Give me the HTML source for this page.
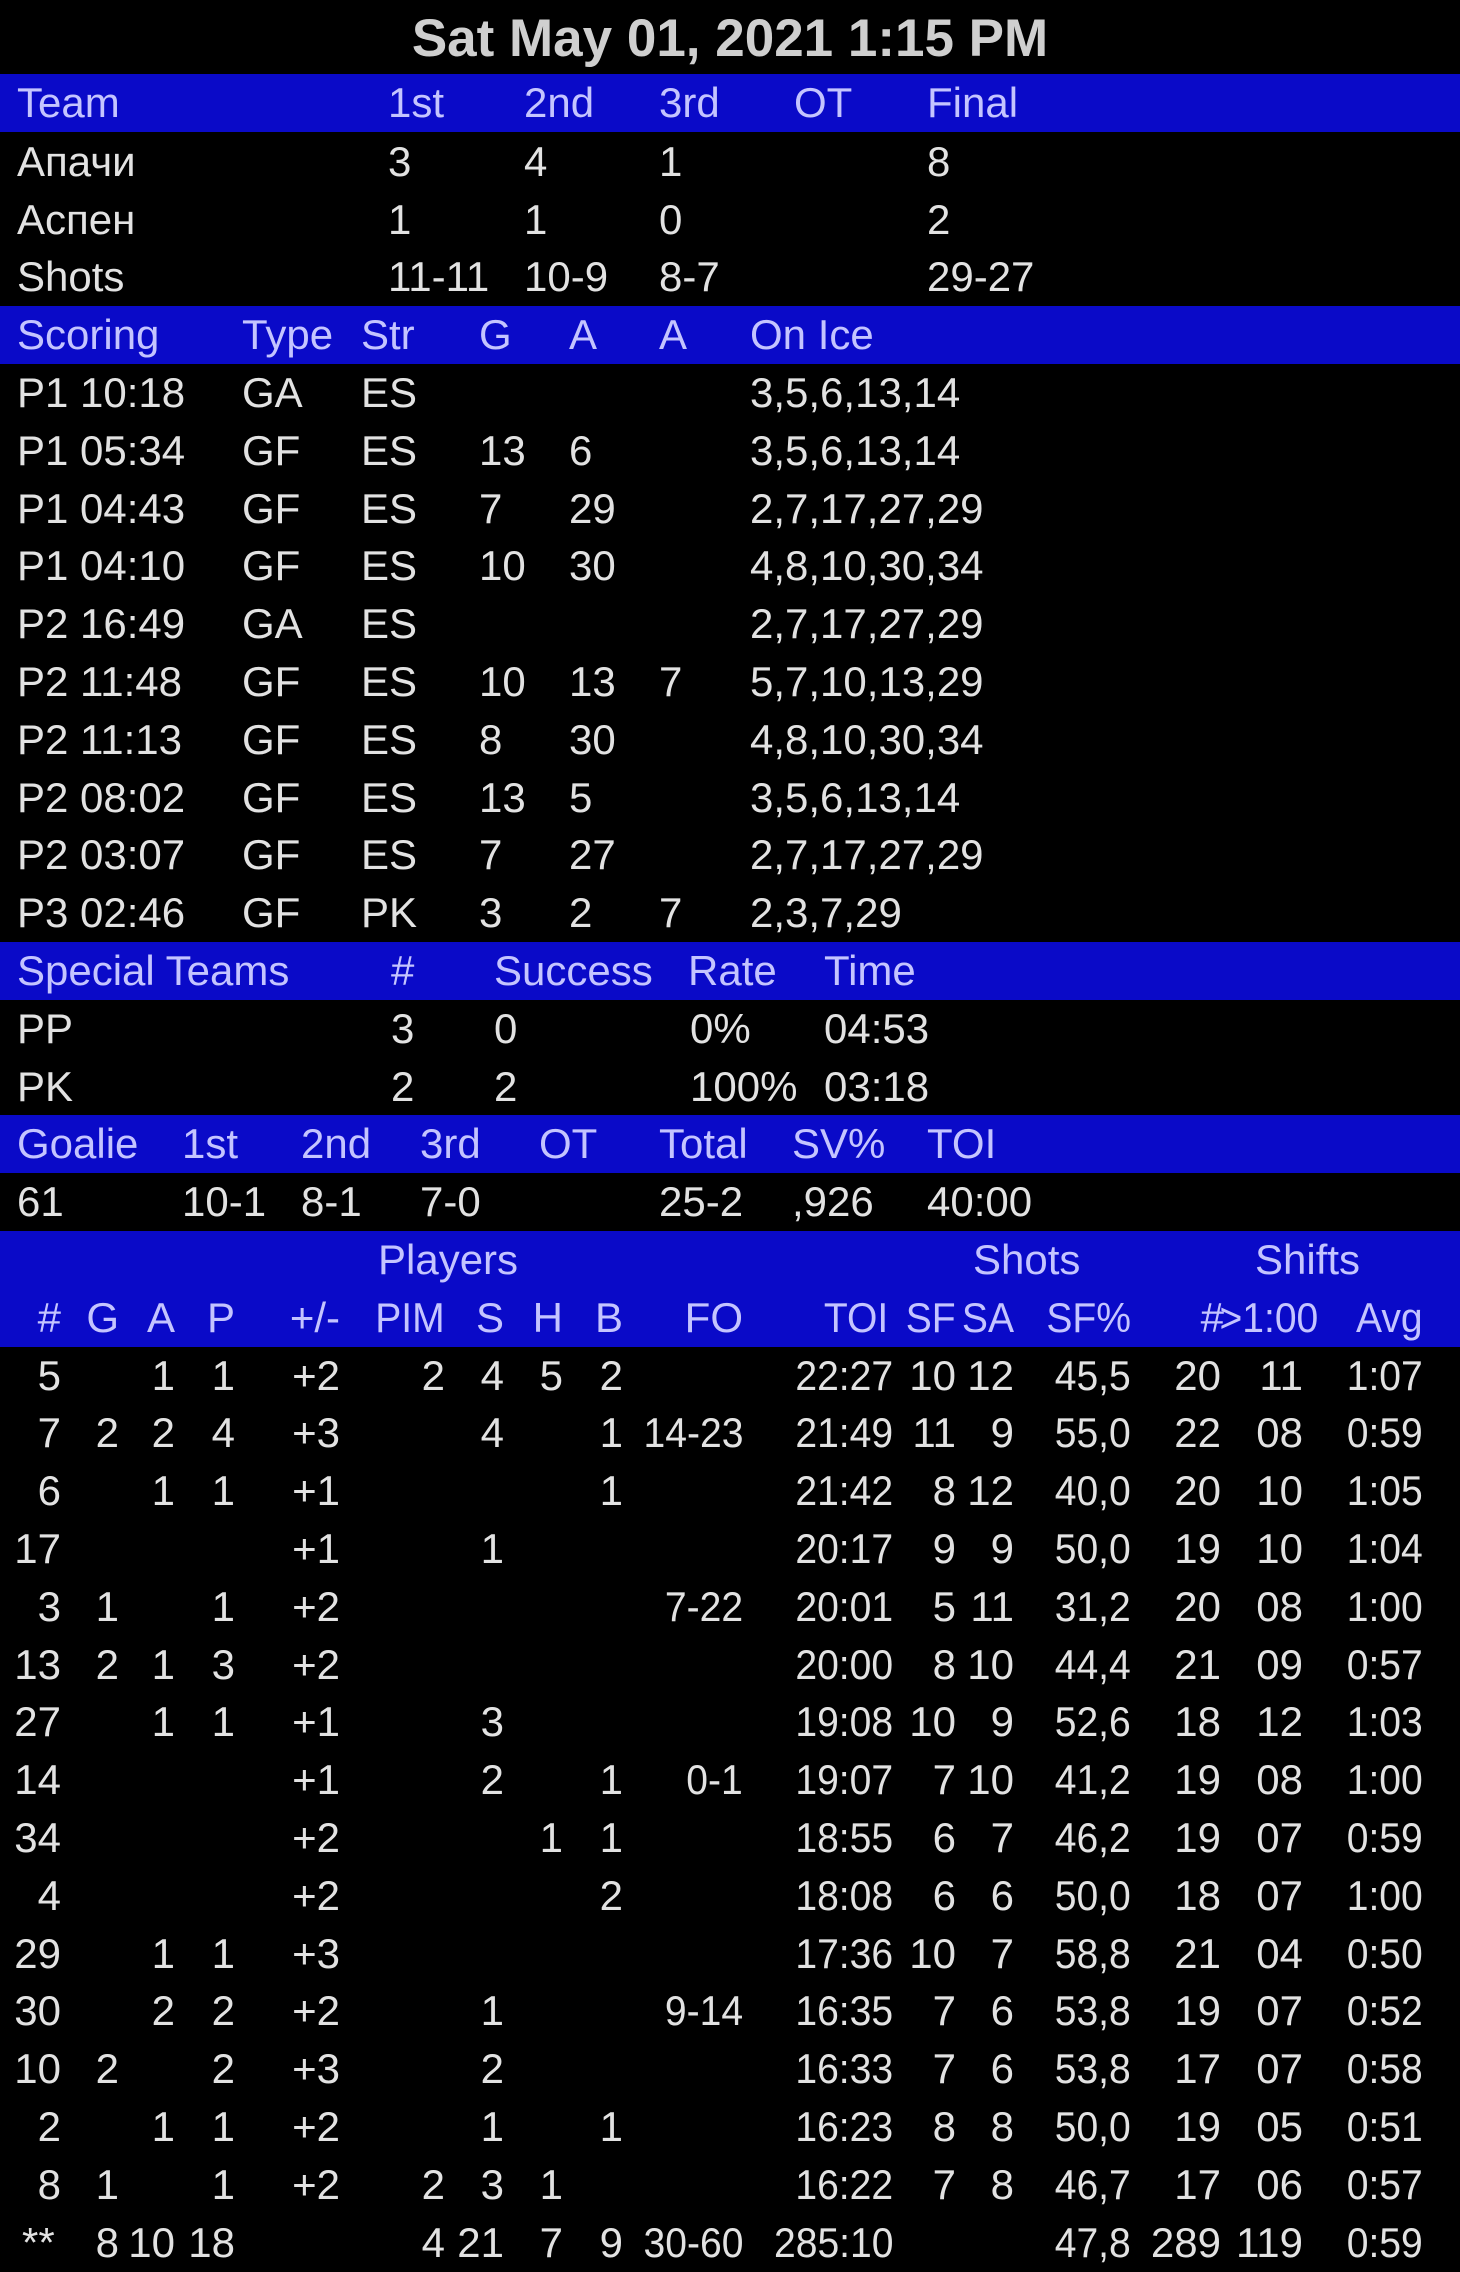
<!DOCTYPE html>
<html><head><meta charset="utf-8"><style>
html,body{margin:0;padding:0;background:#000;}
body{width:1460px;height:2272px;position:relative;overflow:hidden;font-family:"Liberation Sans",sans-serif;}
.t{position:absolute;left:0;top:8px;width:1460px;text-align:center;font-size:53px;font-weight:bold;color:#cfcfcf;line-height:62px;}
.r{position:absolute;left:0;width:1460px;height:58px;}
.b{background:#0a0ac8;}
.r span{position:absolute;top:0;line-height:58px;font-size:42px;color:#e2e2e2;white-space:nowrap;}
.b span{color:#c4c4ff;}
.r span.n{transform:scaleX(0.93);transform-origin:right center;}
.c0{right:1399px}.c1{right:1341px}.c2{right:1285px}.c3{right:1225px}.c4{right:1120px}.c5{right:1015px}.c6{right:956px}.c7{right:897px}.c8{right:837px}.c9{right:717px}.c10{right:567px}.c11{right:504px}.c12{right:446px}.c13{right:329px}.c14{right:239px}.c15{right:157px}.c16{right:37px}
</style></head><body>
<div class="t">Sat May 01, 2021 1:15 PM</div>

<div class="r b" style="top:74px"><span style="left:17px">Team</span><span style="left:388px">1st</span><span style="left:524px">2nd</span><span style="left:659px">3rd</span><span style="left:794px">OT</span><span style="left:927px">Final</span></div>
<div class="r" style="top:133px"><span style="left:17px">Апачи</span><span style="left:388px">3</span><span style="left:524px">4</span><span style="left:659px">1</span><span style="left:927px">8</span></div>
<div class="r" style="top:191px"><span style="left:17px">Аспен</span><span style="left:388px">1</span><span style="left:524px">1</span><span style="left:659px">0</span><span style="left:927px">2</span></div>
<div class="r" style="top:248px"><span style="left:17px">Shots</span><span style="left:388px">11-11</span><span style="left:524px">10-9</span><span style="left:659px">8-7</span><span style="left:927px">29-27</span></div>

<div class="r b" style="top:306px"><span style="left:17px">Scoring</span><span style="left:242px">Type</span><span style="left:361px">Str</span><span style="left:479px">G</span><span style="left:569px">A</span><span style="left:659px">A</span><span style="left:750px">On Ice</span></div>
<div class="r" style="top:364px"><span style="left:17px">P1 10:18</span><span style="left:242px">GA</span><span style="left:361px">ES</span><span style="left:750px">3,5,6,13,14</span></div>
<div class="r" style="top:422px"><span style="left:17px">P1 05:34</span><span style="left:242px">GF</span><span style="left:361px">ES</span><span style="left:479px">13</span><span style="left:569px">6</span><span style="left:750px">3,5,6,13,14</span></div>
<div class="r" style="top:480px"><span style="left:17px">P1 04:43</span><span style="left:242px">GF</span><span style="left:361px">ES</span><span style="left:479px">7</span><span style="left:569px">29</span><span style="left:750px">2,7,17,27,29</span></div>
<div class="r" style="top:537px"><span style="left:17px">P1 04:10</span><span style="left:242px">GF</span><span style="left:361px">ES</span><span style="left:479px">10</span><span style="left:569px">30</span><span style="left:750px">4,8,10,30,34</span></div>
<div class="r" style="top:595px"><span style="left:17px">P2 16:49</span><span style="left:242px">GA</span><span style="left:361px">ES</span><span style="left:750px">2,7,17,27,29</span></div>
<div class="r" style="top:653px"><span style="left:17px">P2 11:48</span><span style="left:242px">GF</span><span style="left:361px">ES</span><span style="left:479px">10</span><span style="left:569px">13</span><span style="left:659px">7</span><span style="left:750px">5,7,10,13,29</span></div>
<div class="r" style="top:711px"><span style="left:17px">P2 11:13</span><span style="left:242px">GF</span><span style="left:361px">ES</span><span style="left:479px">8</span><span style="left:569px">30</span><span style="left:750px">4,8,10,30,34</span></div>
<div class="r" style="top:769px"><span style="left:17px">P2 08:02</span><span style="left:242px">GF</span><span style="left:361px">ES</span><span style="left:479px">13</span><span style="left:569px">5</span><span style="left:750px">3,5,6,13,14</span></div>
<div class="r" style="top:826px"><span style="left:17px">P2 03:07</span><span style="left:242px">GF</span><span style="left:361px">ES</span><span style="left:479px">7</span><span style="left:569px">27</span><span style="left:750px">2,7,17,27,29</span></div>
<div class="r" style="top:884px"><span style="left:17px">P3 02:46</span><span style="left:242px">GF</span><span style="left:361px">PK</span><span style="left:479px">3</span><span style="left:569px">2</span><span style="left:659px">7</span><span style="left:750px">2,3,7,29</span></div>

<div class="r b" style="top:942px"><span style="left:17px">Special Teams</span><span style="left:391px">#</span><span style="left:494px">Success</span><span style="left:688px">Rate</span><span style="left:824px">Time</span></div>
<div class="r" style="top:1000px"><span style="left:17px">PP</span><span style="left:391px">3</span><span style="left:494px">0</span><span style="left:690px">0%</span><span style="left:824px">04:53</span></div>
<div class="r" style="top:1058px"><span style="left:17px">PK</span><span style="left:391px">2</span><span style="left:494px">2</span><span style="left:690px">100%</span><span style="left:824px">03:18</span></div>

<div class="r b" style="top:1115px"><span style="left:17px">Goalie</span><span style="left:182px">1st</span><span style="left:301px">2nd</span><span style="left:420px">3rd</span><span style="left:539px">OT</span><span style="left:659px">Total</span><span style="left:792px">SV%</span><span style="left:927px">TOI</span></div>
<div class="r" style="top:1173px"><span style="left:17px">61</span><span style="left:182px">10-1</span><span style="left:301px">8-1</span><span style="left:420px">7-0</span><span style="left:659px">25-2</span><span style="left:792px">,926</span><span style="left:927px">40:00</span></div>

<div class="r b" style="top:1231px;height:116px">
<span style="left:378px">Players</span><span style="left:973px">Shots</span><span style="left:1255px">Shifts</span>
<span class="c0" style="top:58px">#</span><span class="c1" style="top:58px">G</span><span class="c2" style="top:58px">A</span><span class="c3" style="top:58px">P</span><span class="c4" style="top:58px">+/-</span><span class="c5 n" style="top:58px">PIM</span><span class="c6" style="top:58px">S</span><span class="c7" style="top:58px">H</span><span class="c8" style="top:58px">B</span><span class="c9" style="top:58px">FO</span><span class="n" style="top:58px;right:572px">TOI</span><span class="n" style="top:58px;right:504px">SF</span><span class="c12 n" style="top:58px">SA</span><span class="c13 n" style="top:58px">SF%</span><span style="top:58px;right:236px">#</span><span class="n" style="top:58px;right:142px">&gt;1:00</span><span class="c16 n" style="top:58px">Avg</span>
</div>

<div class="r" style="top:1347px"><span class="c0">5</span><span class="c2">1</span><span class="c3">1</span><span class="c4">+2</span><span class="c5">2</span><span class="c6">4</span><span class="c7">5</span><span class="c8">2</span><span class="c10 n">22:27</span><span class="c11">10</span><span class="c12">12</span><span class="c13 n">45,5</span><span class="c14">20</span><span class="c15">11</span><span class="c16 n">1:07</span></div>
<div class="r" style="top:1404px"><span class="c0">7</span><span class="c1">2</span><span class="c2">2</span><span class="c3">4</span><span class="c4">+3</span><span class="c6">4</span><span class="c8">1</span><span class="c9 n">14-23</span><span class="c10 n">21:49</span><span class="c11">11</span><span class="c12">9</span><span class="c13 n">55,0</span><span class="c14">22</span><span class="c15">08</span><span class="c16 n">0:59</span></div>
<div class="r" style="top:1462px"><span class="c0">6</span><span class="c2">1</span><span class="c3">1</span><span class="c4">+1</span><span class="c8">1</span><span class="c10 n">21:42</span><span class="c11">8</span><span class="c12">12</span><span class="c13 n">40,0</span><span class="c14">20</span><span class="c15">10</span><span class="c16 n">1:05</span></div>
<div class="r" style="top:1520px"><span class="c0">17</span><span class="c4">+1</span><span class="c6">1</span><span class="c10 n">20:17</span><span class="c11">9</span><span class="c12">9</span><span class="c13 n">50,0</span><span class="c14">19</span><span class="c15">10</span><span class="c16 n">1:04</span></div>
<div class="r" style="top:1578px"><span class="c0">3</span><span class="c1">1</span><span class="c3">1</span><span class="c4">+2</span><span class="c9 n">7-22</span><span class="c10 n">20:01</span><span class="c11">5</span><span class="c12">11</span><span class="c13 n">31,2</span><span class="c14">20</span><span class="c15">08</span><span class="c16 n">1:00</span></div>
<div class="r" style="top:1636px"><span class="c0">13</span><span class="c1">2</span><span class="c2">1</span><span class="c3">3</span><span class="c4">+2</span><span class="c10 n">20:00</span><span class="c11">8</span><span class="c12">10</span><span class="c13 n">44,4</span><span class="c14">21</span><span class="c15">09</span><span class="c16 n">0:57</span></div>
<div class="r" style="top:1693px"><span class="c0">27</span><span class="c2">1</span><span class="c3">1</span><span class="c4">+1</span><span class="c6">3</span><span class="c10 n">19:08</span><span class="c11">10</span><span class="c12">9</span><span class="c13 n">52,6</span><span class="c14">18</span><span class="c15">12</span><span class="c16 n">1:03</span></div>
<div class="r" style="top:1751px"><span class="c0">14</span><span class="c4">+1</span><span class="c6">2</span><span class="c8">1</span><span class="c9 n">0-1</span><span class="c10 n">19:07</span><span class="c11">7</span><span class="c12">10</span><span class="c13 n">41,2</span><span class="c14">19</span><span class="c15">08</span><span class="c16 n">1:00</span></div>
<div class="r" style="top:1809px"><span class="c0">34</span><span class="c4">+2</span><span class="c7">1</span><span class="c8">1</span><span class="c10 n">18:55</span><span class="c11">6</span><span class="c12">7</span><span class="c13 n">46,2</span><span class="c14">19</span><span class="c15">07</span><span class="c16 n">0:59</span></div>
<div class="r" style="top:1867px"><span class="c0">4</span><span class="c4">+2</span><span class="c8">2</span><span class="c10 n">18:08</span><span class="c11">6</span><span class="c12">6</span><span class="c13 n">50,0</span><span class="c14">18</span><span class="c15">07</span><span class="c16 n">1:00</span></div>
<div class="r" style="top:1925px"><span class="c0">29</span><span class="c2">1</span><span class="c3">1</span><span class="c4">+3</span><span class="c10 n">17:36</span><span class="c11">10</span><span class="c12">7</span><span class="c13 n">58,8</span><span class="c14">21</span><span class="c15">04</span><span class="c16 n">0:50</span></div>
<div class="r" style="top:1982px"><span class="c0">30</span><span class="c2">2</span><span class="c3">2</span><span class="c4">+2</span><span class="c6">1</span><span class="c9 n">9-14</span><span class="c10 n">16:35</span><span class="c11">7</span><span class="c12">6</span><span class="c13 n">53,8</span><span class="c14">19</span><span class="c15">07</span><span class="c16 n">0:52</span></div>
<div class="r" style="top:2040px"><span class="c0">10</span><span class="c1">2</span><span class="c3">2</span><span class="c4">+3</span><span class="c6">2</span><span class="c10 n">16:33</span><span class="c11">7</span><span class="c12">6</span><span class="c13 n">53,8</span><span class="c14">17</span><span class="c15">07</span><span class="c16 n">0:58</span></div>
<div class="r" style="top:2098px"><span class="c0">2</span><span class="c2">1</span><span class="c3">1</span><span class="c4">+2</span><span class="c6">1</span><span class="c8">1</span><span class="c10 n">16:23</span><span class="c11">8</span><span class="c12">8</span><span class="c13 n">50,0</span><span class="c14">19</span><span class="c15">05</span><span class="c16 n">0:51</span></div>
<div class="r" style="top:2156px"><span class="c0">8</span><span class="c1">1</span><span class="c3">1</span><span class="c4">+2</span><span class="c5">2</span><span class="c6">3</span><span class="c7">1</span><span class="c10 n">16:22</span><span class="c11">7</span><span class="c12">8</span><span class="c13 n">46,7</span><span class="c14">17</span><span class="c15">06</span><span class="c16 n">0:57</span></div>
<div class="r" style="top:2214px"><span style="left:22px">**</span><span class="c1">8</span><span class="c2">10</span><span class="c3">18</span><span class="c5">4</span><span class="c6">21</span><span class="c7">7</span><span class="c8">9</span><span class="c9 n">30-60</span><span class="c10 n">285:10</span><span class="c13 n">47,8</span><span class="c14">289</span><span class="c15">119</span><span class="c16 n">0:59</span></div>
</body></html>
